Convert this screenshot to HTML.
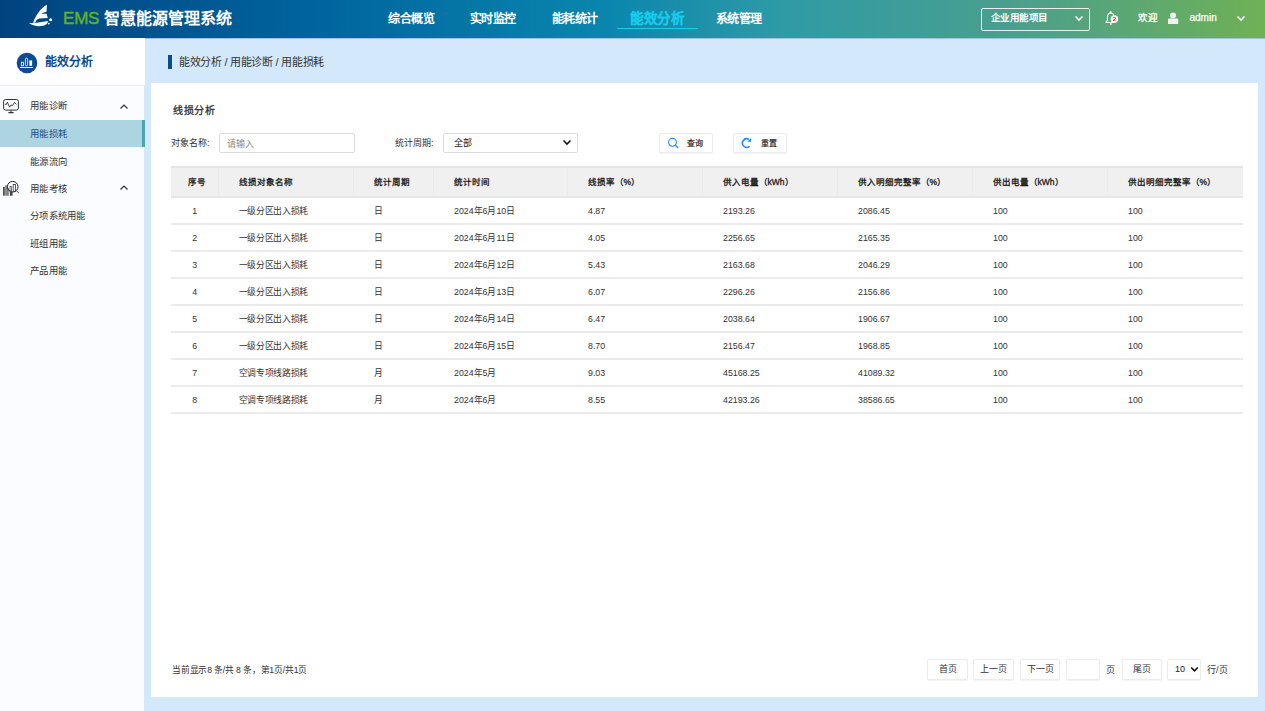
<!DOCTYPE html>
<html lang="zh-CN"><head><meta charset="utf-8">
<style>
*{margin:0;padding:0;box-sizing:border-box}
html,body{width:1265px;height:711px;overflow:hidden;background:#d3e8fb;font-family:"Liberation Sans",sans-serif;color:#333}
.abs{position:absolute}
#hdr{left:0;top:0;width:1265px;height:38px;background:linear-gradient(90deg,#00437f 0%,#00649e 25%,#0a86ae 48%,#2f9ba6 62%,#4a9f8e 80%,#6fb155 100%)}
.nav{top:10px;font-size:12px;font-weight:bold;color:#fff;letter-spacing:-0.5px;white-space:nowrap;line-height:17px}
#side{left:0;top:38px;width:144px;height:673px;background:#fafcff}
#sidetop{left:0;top:38px;width:145px;height:48px;background:#fff;border-bottom:1px solid #eeeeee}
.mi{left:30px;font-size:9.4px;letter-spacing:0.3px;color:#333;white-space:nowrap;line-height:12px}
#card{left:151px;top:83px;width:1107px;height:614px;background:#fff}
table{border-collapse:collapse;table-layout:fixed}
th{background:#f0f0f0;font-weight:normal;-webkit-text-stroke:0.3px #1a1a1a;font-size:8.5px;text-align:left;height:30px;padding:0 0 2px 20px;border-top:2px solid #e6e6e6;border-bottom:2px solid #e6e6e6;border-left:1px solid #eaeaea;color:#1a1a1a}
td{font-size:8.8px;text-align:left;height:27px;padding:0 0 0 21px;border-bottom:2px solid #ebebeb;color:#333}
th:first-child,td:first-child{text-align:center;padding:0;border-left:none}
th:first-child{padding-left:5px;padding-bottom:2px}
td:nth-child(2){letter-spacing:-0.3px;padding-left:20px}
.btn{border:1px solid #ececec;border-radius:2px;background:#fff;box-shadow:0 1px 1px rgba(0,0,0,.05);font-size:9px;color:#333;text-align:center}
</style></head><body>
<div id="hdr" class="abs"></div>
<!-- logo -->
<svg class="abs" style="left:28px;top:4px" width="26" height="24" viewBox="0 0 26 24">
  <path d="M18.9 0.8 C13 4 8.5 10 5 18.8 L7.2 18.6 C8.2 16.2 9.5 14.9 11.2 14.6 L19.8 14 L18.6 9.8 L13 9.7 L18.6 7.4 Z" fill="#fff"/>
  <path d="M0.8 19.3 C7 18.8 14 18.3 20.2 17 C19.5 19.8 17.5 21.6 13.5 22.1 C8 22.6 4 21 0.8 19.3Z" fill="#fff"/>
  <circle cx="22.6" cy="15.8" r="1.5" fill="#fff"/><circle cx="20.8" cy="19.6" r="0.9" fill="#fff"/>
</svg>
<div class="abs" style="left:63px;top:9px;font-size:17px;color:#62b02a;-webkit-text-stroke:0.45px #62b02a;line-height:20px;letter-spacing:-0.2px">EMS</div>
<div class="abs" style="left:104px;top:8px;font-size:16px;font-weight:bold;color:#fff;line-height:22px;white-space:nowrap">智慧能源管理系统</div>
<div class="abs nav" style="left:388px;top:10.5px">综合概览</div>
<div class="abs nav" style="left:469.5px;top:10.5px">实时监控</div>
<div class="abs nav" style="left:551.5px;top:10.5px">能耗统计</div>
<div class="abs nav" style="left:630px;top:10px;font-size:13.6px;color:#16cdec;-webkit-text-stroke:0.15px #16cdec;letter-spacing:-0.4px">能效分析</div>
<div class="abs" style="left:617px;top:28px;width:81px;height:1px;background:#16cdec"></div>
<div class="abs nav" style="left:715.5px;top:10.5px">系统管理</div>
<!-- project select -->
<div class="abs" style="left:981px;top:8px;width:109px;height:23px;border:1px solid rgba(255,255,255,.85);border-radius:2px"></div>
<div class="abs" style="left:991px;top:12px;font-size:9.5px;color:#fff;letter-spacing:-0.6px;-webkit-text-stroke:0.3px #fff;line-height:12px;white-space:nowrap">企业用能项目</div>
<svg class="abs" style="left:1074px;top:15px" width="10" height="7" viewBox="0 0 10 7"><path d="M1.5 1.5 L5 5 L8.5 1.5" stroke="#fff" stroke-width="1.6" fill="none"/></svg>
<!-- bell -->
<svg class="abs" style="left:1104px;top:10px" width="16" height="16" viewBox="0 0 16 16">
 <circle cx="6.7" cy="2.4" r="1.1" fill="#fff"/>
 <path d="M6.7 3 C4.6 3 3.6 4.8 3.5 7 L3.3 10.5 L2 12.5 L11 12.5 L9.6 10.5 L9.8 7 C9.8 4.8 8.8 3 6.7 3Z" fill="none" stroke="#fff" stroke-width="1.1" stroke-linejoin="round"/>
 <circle cx="6.8" cy="14" r="1" fill="#fff"/>
 <circle cx="10.4" cy="9" r="3.8" fill="#fff"/>
 <text x="10.4" y="11" font-size="6" font-weight="bold" text-anchor="middle" fill="#e0182e" font-family="Liberation Sans">2</text>
</svg>
<div class="abs" style="left:1138px;top:12px;font-size:9.5px;color:#fff;line-height:12px;letter-spacing:-0.3px;-webkit-text-stroke:0.3px #fff">欢迎</div>
<svg class="abs" style="left:1167px;top:12px" width="12" height="13" viewBox="0 0 12 13">
 <circle cx="6" cy="3.4" r="3" fill="#f2f2f6"/><path d="M1 12 L1 7.6 C1 6.8 1.6 6.5 2.5 6.5 L9.5 6.5 C10.4 6.5 11.2 6.8 11.2 7.6 L11.2 12Z" fill="#f2f2f6"/>
</svg>
<div class="abs" style="left:1189.5px;top:12px;font-size:10px;color:#fff;line-height:12px;-webkit-text-stroke:0.25px #fff">admin</div>
<svg class="abs" style="left:1236px;top:15px" width="10" height="7" viewBox="0 0 10 7"><path d="M1.5 1.5 L5 5 L8.5 1.5" stroke="#fff" stroke-width="1.6" fill="none"/></svg>

<div class="abs" style="left:145px;top:38px;width:1120px;height:1px;background:#9fc2e6"></div>
<!-- sidebar -->
<div id="side" class="abs"></div>
<div id="sidetop" class="abs"></div>
<svg class="abs" style="left:16px;top:52px" width="22" height="22" viewBox="0 0 22 22">
 <circle cx="11" cy="11" r="10.3" fill="#0c4b8e"/>
 <rect x="5.3" y="10.2" width="2.2" height="3.6" fill="none" stroke="#fff" stroke-width=".8"/>
 <rect x="9.4" y="6.2" width="2.2" height="7.6" rx="1" fill="none" stroke="#fff" stroke-width=".8"/>
 <rect x="13.3" y="8.4" width="2.8" height="5.4" fill="#fff"/>
 <path d="M4 15.5 L17 15.5" stroke="#fff" stroke-width=".9"/>
</svg>
<div class="abs" style="left:45px;top:55px;font-size:12px;font-weight:bold;color:#0c4b8e;line-height:15px">能效分析</div>

<svg class="abs" style="left:2px;top:98px" width="18" height="16" viewBox="0 0 18 16">
 <rect x="1.6" y="1.5" width="14.8" height="10.6" rx="2" fill="none" stroke="#333" stroke-width="1"/>
 <path d="M2.9 6.3 L4.5 6.3 L5.3 4.2 L7.6 9.2 L9 7 L10.5 7.5 L12.4 4.6 L14.5 6.4" stroke="#333" stroke-width=".9" fill="none" stroke-linejoin="round"/>
 <path d="M9 12.2 L9 14 M6.4 14.6 L11.6 14.6" stroke="#333" stroke-width="1.1"/>
</svg>
<div class="abs mi" style="top:100px">用能诊断</div>
<svg class="abs" style="left:119px;top:103px" width="10" height="7" viewBox="0 0 10 7"><path d="M1.5 5.5 L5 2 L8.5 5.5" stroke="#333" stroke-width="1.2" fill="none"/></svg>
<div class="abs" style="left:0;top:120px;width:145px;height:27px;background:#acd5e1;border-right:3px solid #4aa6a9"></div>
<div class="abs mi" style="top:128px;color:#184d8c">用能损耗</div>
<div class="abs mi" style="top:156px">能源流向</div>
<svg class="abs" style="left:2px;top:179px" width="18" height="18" viewBox="0 0 18 18">
 <rect x="1.1" y="8" width="1.6" height="8.7" fill="#3a3a3a"/><rect x="3.1" y="6.3" width="2.1" height="10.4" fill="#888"/><rect x="5.2" y="9" width="1.5" height="7.7" fill="#666"/>
 <rect x="7.9" y="12.8" width="2.6" height="3.9" fill="#444"/>
 <circle cx="10.7" cy="7.7" r="5.3" fill="none" stroke="#222" stroke-width="1"/>
 <path d="M14.6 11.8 L16.8 14.2" stroke="#444" stroke-width="1"/>
 <rect x="8" y="7.4" width="1.5" height="4.6" fill="none" stroke="#444" stroke-width=".7"/><rect x="11.2" y="5.4" width="2.2" height="7" fill="none" stroke="#333" stroke-width=".8"/>
</svg>
<div class="abs mi" style="top:183px">用能考核</div>
<svg class="abs" style="left:119px;top:184px" width="10" height="7" viewBox="0 0 10 7"><path d="M1.5 5.5 L5 2 L8.5 5.5" stroke="#333" stroke-width="1.2" fill="none"/></svg>
<div class="abs mi" style="top:210px">分项系统用能</div>
<div class="abs mi" style="top:238px">班组用能</div>
<div class="abs mi" style="top:265px">产品用能</div>

<!-- breadcrumb -->
<div class="abs" style="left:168px;top:55px;width:4px;height:14px;background:#0c4b8e"></div>
<div class="abs" style="left:179px;top:55px;font-size:11px;letter-spacing:-0.3px;color:#333;line-height:14px;white-space:nowrap">能效分析 / 用能诊断 / 用能损耗</div>

<!-- card -->
<div id="card" class="abs"></div>
<div class="abs" style="left:173px;top:104px;font-size:10px;letter-spacing:0.6px;color:#333;-webkit-text-stroke:0.3px #333;line-height:13px">线损分析</div>
<div class="abs" style="left:171px;top:138px;font-size:9px;color:#333;line-height:11px;white-space:nowrap">对象名称:</div>
<div class="abs" style="left:219px;top:133px;width:136px;height:20px;border:1px solid #dcdcdc;border-radius:2px"></div>
<div class="abs" style="left:227px;top:139px;font-size:9px;color:#8a8a8a;line-height:11px">请输入</div>
<div class="abs" style="left:395px;top:138px;font-size:9px;color:#333;line-height:11px;white-space:nowrap">统计周期:</div>
<div class="abs" style="left:443px;top:133px;width:135px;height:20px;border:1px solid #dcdcdc;border-radius:2px"></div>
<div class="abs" style="left:454px;top:138px;font-size:9px;color:#1a1a1a;line-height:11px">全部</div>
<svg class="abs" style="left:561.5px;top:139px" width="10" height="7" viewBox="0 0 10 7"><path d="M1.5 1.5 L5 5 L8.5 1.5" stroke="#111" stroke-width="1.6" fill="none"/></svg>
<div class="abs btn" style="left:659px;top:133px;width:54px;height:20px"></div>
<svg class="abs" style="left:667px;top:137px" width="13" height="13" viewBox="0 0 13 13"><circle cx="5.5" cy="5.3" r="3.9" fill="none" stroke="#1a8cff" stroke-width="1.15"/><path d="M8.4 8.3 L10.8 10.6" stroke="#1a8cff" stroke-width="1.3" stroke-linecap="round"/></svg>
<div class="abs" style="left:687px;top:138px;font-size:8px;color:#222;-webkit-text-stroke:0.2px #222;line-height:11px">查询</div>
<div class="abs btn" style="left:733px;top:133px;width:54px;height:20px"></div>
<svg class="abs" style="left:740px;top:137px" width="13" height="13" viewBox="0 0 13 13"><path d="M8.9 2.4 A4.25 4.25 0 1 0 9.6 9.2" fill="none" stroke="#1a8cff" stroke-width="1.55"/><path d="M7.3 4.7 L11.1 4.8 L11 0.9 Z" fill="#1a8cff"/></svg>
<div class="abs" style="left:761px;top:138px;font-size:8px;color:#222;-webkit-text-stroke:0.2px #222;line-height:11px">重置</div>

<table class="abs" style="left:171px;top:166px;width:1072px">
<colgroup><col style="width:47.5px"><col style="width:134.5px"><col style="width:80px"><col style="width:134px"><col style="width:135px"><col style="width:135px"><col style="width:135px"><col style="width:135px"><col style="width:136px"></colgroup>
<thead><tr><th>序号</th><th>线损对象名称</th><th>统计周期</th><th>统计时间</th><th>线损率（%）</th><th>供入电量（kWh）</th><th>供入明细完整率（%）</th><th>供出电量（kWh）</th><th>供出明细完整率（%）</th></tr></thead>
<tbody>
<tr><td>1</td><td>一级分区出入损耗</td><td>日</td><td>2024年6月10日</td><td>4.87</td><td>2193.26</td><td>2086.45</td><td>100</td><td>100</td></tr>
<tr><td>2</td><td>一级分区出入损耗</td><td>日</td><td>2024年6月11日</td><td>4.05</td><td>2256.65</td><td>2165.35</td><td>100</td><td>100</td></tr>
<tr><td>3</td><td>一级分区出入损耗</td><td>日</td><td>2024年6月12日</td><td>5.43</td><td>2163.68</td><td>2046.29</td><td>100</td><td>100</td></tr>
<tr><td>4</td><td>一级分区出入损耗</td><td>日</td><td>2024年6月13日</td><td>6.07</td><td>2296.26</td><td>2156.86</td><td>100</td><td>100</td></tr>
<tr><td>5</td><td>一级分区出入损耗</td><td>日</td><td>2024年6月14日</td><td>6.47</td><td>2038.64</td><td>1906.67</td><td>100</td><td>100</td></tr>
<tr><td>6</td><td>一级分区出入损耗</td><td>日</td><td>2024年6月15日</td><td>8.70</td><td>2156.47</td><td>1968.85</td><td>100</td><td>100</td></tr>
<tr><td>7</td><td>空调专项线路损耗</td><td>月</td><td>2024年5月</td><td>9.03</td><td>45168.25</td><td>41089.32</td><td>100</td><td>100</td></tr>
<tr><td>8</td><td>空调专项线路损耗</td><td>月</td><td>2024年6月</td><td>8.55</td><td>42193.26</td><td>38586.65</td><td>100</td><td>100</td></tr>
</tbody></table>

<!-- footer -->
<div class="abs" style="left:172px;top:665px;font-size:8.7px;letter-spacing:-0.2px;color:#333;line-height:11px;white-space:nowrap">当前显示8 条/共 8 条，第1页/共1页</div>
<div class="abs btn" style="left:927px;top:659px;width:41px;height:21px;line-height:19px">首页</div>
<div class="abs btn" style="left:973px;top:659px;width:41px;height:21px;line-height:19px">上一页</div>
<div class="abs btn" style="left:1020px;top:659px;width:40px;height:21px;line-height:19px">下一页</div>
<div class="abs btn" style="left:1066px;top:659px;width:34px;height:21px"></div>
<div class="abs" style="left:1105.5px;top:665px;font-size:9px;color:#333;line-height:11px">页</div>
<div class="abs btn" style="left:1122px;top:659px;width:40px;height:21px;line-height:19px">尾页</div>
<div class="abs btn" style="left:1167px;top:659px;width:34px;height:21px"></div>
<div class="abs" style="left:1175px;top:664px;font-size:9px;color:#222;line-height:11px">10</div>
<svg class="abs" style="left:1190px;top:666px" width="9" height="7" viewBox="0 0 9 7"><path d="M1.2 1.5 L4.5 4.8 L7.8 1.5" stroke="#111" stroke-width="1.6" fill="none"/></svg>
<div class="abs" style="left:1207px;top:665px;font-size:9px;color:#333;line-height:11px;white-space:nowrap">行/页</div>
</body></html>
